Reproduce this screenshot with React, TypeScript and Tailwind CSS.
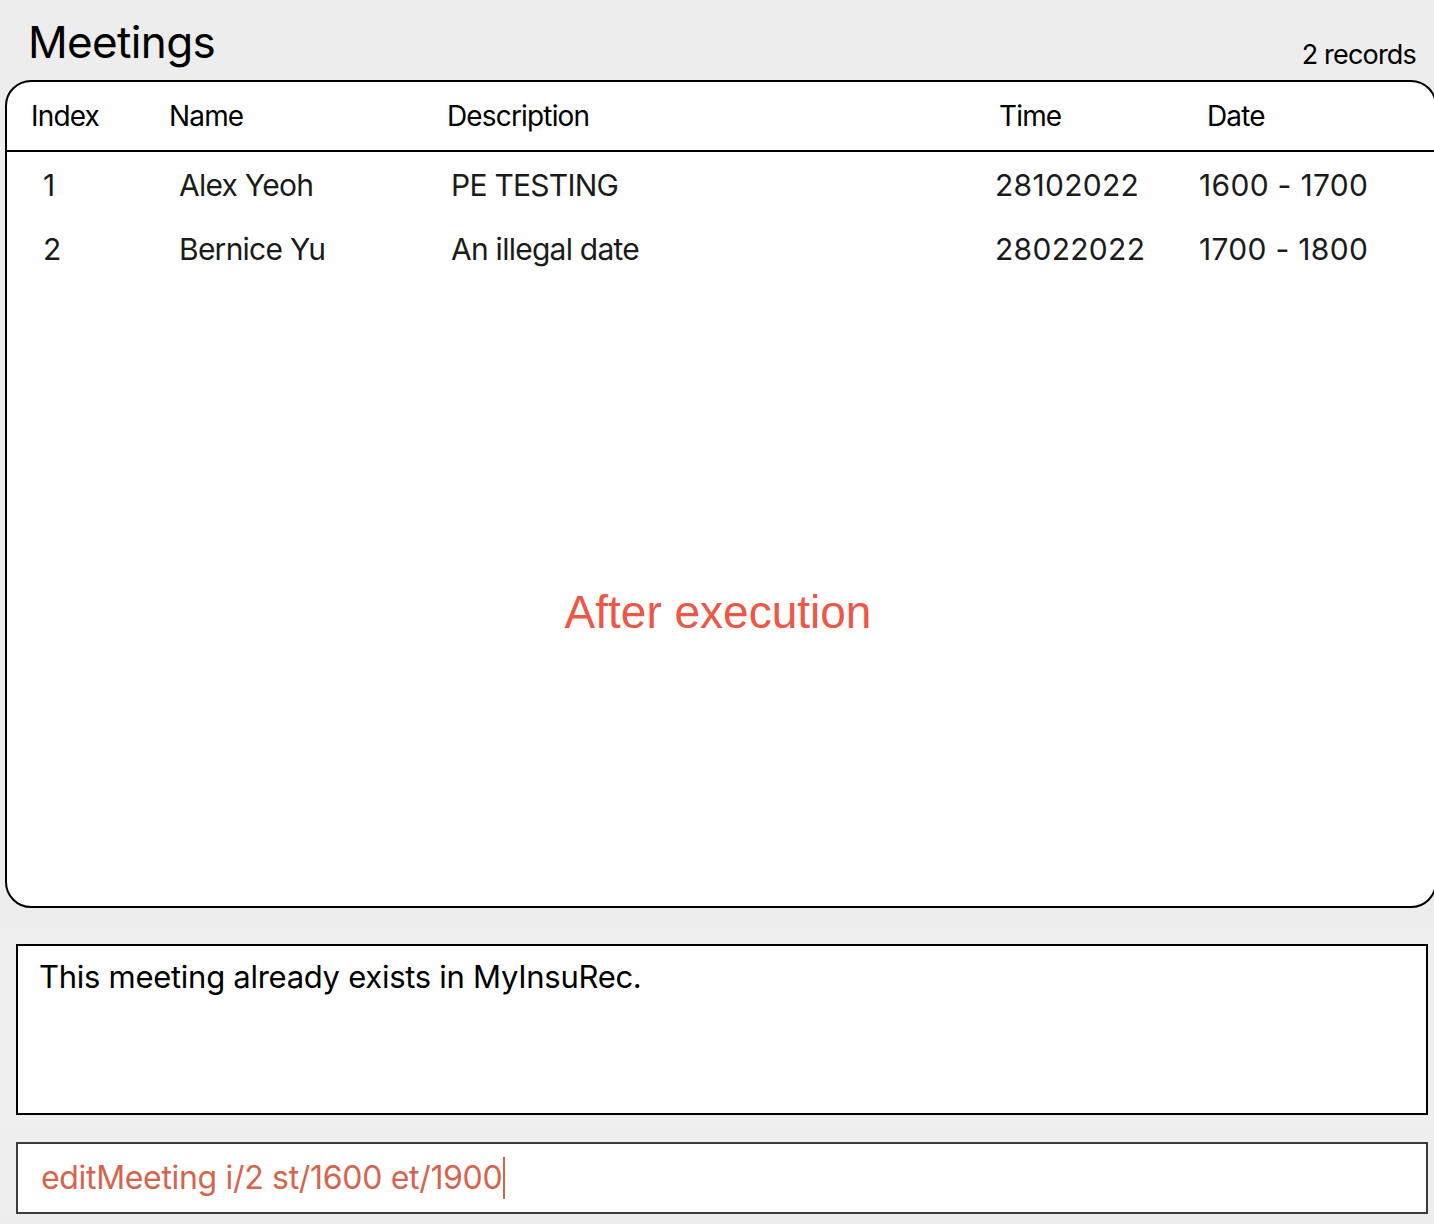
const headers = [
  { label: 'Index', cls: 'pl-[24px]' },
  { label: 'Name', cls: 'pl-[4px]' },
  { label: 'Description', cls: 'pl-[4px]' },
  { label: 'Time', cls: 'pl-[8px]' },
  { label: 'Date', cls: 'pl-[12px]' },
];

const cellStyles = [
  'pl-[36px]',
  'pl-[14px] tracking-[-0.025em]',
  'pl-[8px] tracking-[-0.025em]',
  'pl-[4px] tracking-[0.01em]',
  'pl-[4px] tracking-[0.01em]',
];

const meetings = [
  ['1', 'Alex Yeoh', 'PE TESTING', '28102022', '1600 - 1700'],
  ['2', 'Bernice Yu', 'An illegal date', '28022022', '1700 - 1800'],
];

const cols = 'grid grid-cols-[158px_278px_548px_204px_1fr]';

export default function App() {
  return (
    <div
      className="w-[1434px] h-[1224px] overflow-hidden bg-[#ededed] text-black flex flex-col"
      style={{ fontFamily: 'Inter, "Noto Sans", sans-serif' }}
    >
      <div className="h-[80px] flex items-start justify-between pl-[28px] pr-[18px]">
        <h1 className="text-[44px] leading-none mt-[20px] tracking-[-0.015em]">Meetings</h1>
        <span className="text-[27px] leading-none mt-[41px] tracking-[-0.03em]">2 records</span>
      </div>

      <div className="ml-[5px] w-[1432px] h-[828px] bg-white border-2 border-black rounded-[26px] flex flex-col">
        <div className={`${cols} h-[70px] items-center border-b-2 border-black text-[28px] tracking-[-0.03em]`}>
          {headers.map((h) => (
            <div key={h.label} className={h.cls}>
              {h.label}
            </div>
          ))}
        </div>
        <div className="pt-[1px]">
          {meetings.map((row) => (
            <div key={row[0]} className={`${cols} h-[64px] items-center text-[30px] text-[#1b1b1b]`}>
              {row.map((cell, i) => (
                <div key={i} className={cellStyles[i]}>
                  {cell}
                </div>
              ))}
            </div>
          ))}
        </div>
        <div className="flex-1 flex items-start justify-center pt-[308px] pr-[6px]">
          <span
            className="text-[46px] leading-none text-[#ee5645]"
            style={{ fontFamily: '"Liberation Sans", Arial, sans-serif' }}
          >
            After execution
          </span>
        </div>
      </div>

      <div className="h-[20px]" />
      <div className="bg-[#efefef] pt-[16px] pb-[13px] px-[16px]">
        <div className="w-[1412px] h-[171px] bg-white border-2 border-black px-[21px] pt-[12px] text-[31px] leading-tight tracking-[-0.009em]">
          This meeting already exists in MyInsuRec.
        </div>
      </div>
      <div className="bg-[#eeeeee] pt-[14px] px-[16px]">
        <div className="w-[1412px] h-[72px] bg-white border-2 border-[#3b3b3b] pl-[23px] flex items-center text-[32px] text-[#d6644d] tracking-[-0.01em]">
          <span>editMeeting i/2 st/1600 et/1900</span>
          <span className="w-[2px] h-[42px] bg-[#d6644d] ml-[1px]" />
        </div>
      </div>
    </div>
  );
}
